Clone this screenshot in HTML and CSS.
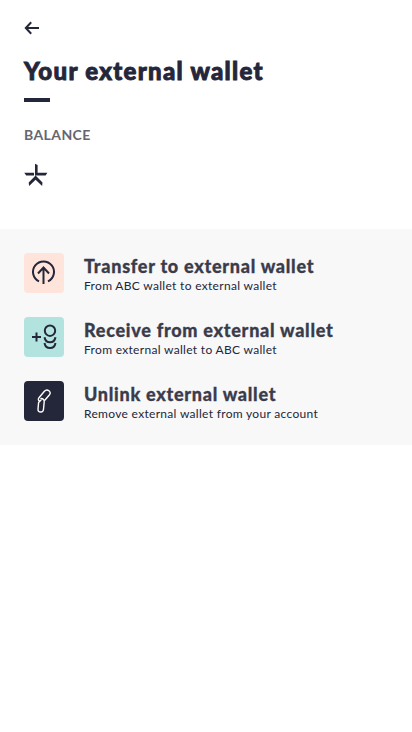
FILE: index.html
```html
<!DOCTYPE html>
<html lang="en">
<head>
<meta charset="utf-8">
<meta name="viewport" content="width=device-width, initial-scale=1">
<title>Your external wallet</title>
<link rel="stylesheet" href="styles.css">
</head>
<body>
<main>
  <header class="header">
    <a class="back" aria-label="Back"><svg width="16" height="16" viewBox="0 0 16 16" fill="none" stroke="currentColor" stroke-width="2"><path d="M7.2 2.3 1.8 8l5.4 5.7M2 8h13"/></svg></a>
    <h1 class="title">Your external wallet</h1>
    <div class="rule"></div>
    <h2 class="label">BALANCE</h2>
    <svg class="token" width="24" height="24" viewBox="0 0 24 24" fill="currentColor"><path d="M11 .8l2.6 1.200v7.800h9.800l-1.800 2.600H11zM.3 9.800H10v2.600H2.200zM11.600 12.600l6.900 6.900-.4 3.500-6.500-6.200-6.500 6.200-.4-3.500z"/></svg>
  </header>
  <section class="actions">
    <a class="action">
      <span class="tile tile-send"><svg width="40" height="40" viewBox="0 0 40 40" fill="none" stroke="currentColor" stroke-width="2"><path d="M15 28.400a10.500 10.500 0 1 1 9 0M19.500 31V14.500M14 20.500l5.500-6 5.500 6"/></svg></span>
      <span class="text"><strong class="name">Transfer to external wallet</strong><span class="hint">From ABC wallet to external wallet</span></span>
    </a>
    <a class="action">
      <span class="tile tile-receive"><svg width="40" height="40" viewBox="0 0 40 40" fill="none" stroke="currentColor" stroke-width="2"><circle cx="26" cy="13.700" r="5.200"/><path d="M8 20h9M12.500 15.500v9M20.500 20.200c1.300 6.800 9.700 6.800 11 0M20.500 26c1.300 6.800 9.700 6.800 11 0"/></svg></span>
      <span class="text"><strong class="name">Receive from external wallet</strong><span class="hint">From external wallet to ABC wallet</span></span>
    </a>
    <a class="action">
      <span class="tile tile-unlink"><svg width="40" height="40" viewBox="0 0 40 40" fill="none" stroke="currentColor" stroke-width="1.400" stroke-linecap="round"><path d="M15.500 20.200c-1.500-1-1.400-2.300-.5-3.500l5.200-6.200c1.600-1.900 3.300-1.900 4.700-.8 1.600 1.300 1.700 2.700.4 4.300L21 19M17 17.500c2.200.2 3.400 1.200 3.200 3.200l-.7 7.500c-.2 2-1.200 2.900-2.800 2.800-1.900-.1-2.900-1.100-2.700-3l.6-6.500 2.400-2.500"/></svg></span>
      <span class="text"><strong class="name">Unlink external wallet</strong><span class="hint">Remove external wallet from your account</span></span>
    </a>
  </section>
</main>
</body>
</html>
```
FILE: styles.css
```css
* { box-sizing: border-box; }
body {
  margin: 0;
  background: #fff;
  color: #24263a;
  font-family: Lato, "Open Sans", sans-serif;
}
svg { display: block; }
.header { height: 229px; padding: 20px 24px 0; }
.back { display: block; width: 16px; height: 16px; }
.title {
  margin: 19px 0 0;
  font-size: 24px;
  line-height: 32px;
  font-weight: 900;
  letter-spacing: 1.3px;
  -webkit-text-stroke: 0.9px currentColor;
  white-space: nowrap;
}
.rule { width: 26px; height: 4px; margin-top: 11px; background: #24263a; }
.label {
  margin: 23px 0 0;
  font-size: 14px;
  line-height: 20px;
  font-weight: 700;
  letter-spacing: 0.4px;
  color: #65666f;
}
.token { margin-top: 18px; }
.actions {
  display: flex;
  flex-direction: column;
  gap: 24px;
  padding: 24px;
  background: #f8f8f8;
}
.action { display: flex; gap: 20px; height: 40px; }
.tile { width: 40px; height: 40px; border-radius: 4px; }
.tile-send { background: #ffe4db; }
.tile-receive { background: #b3e3df; }
.tile-unlink { background: #24263a; color: #fff; }
.text { display: flex; flex-direction: column; padding-top: 1px; white-space: nowrap; }
.name {
  font-size: 18px;
  line-height: 25px;
  font-weight: 900;
  letter-spacing: 0.73px;
  -webkit-text-stroke: 0.3px currentColor;
  color: #3b3c4b;
}
.hint { font-size: 12px; line-height: 14px; letter-spacing: 0.31px; }
```
